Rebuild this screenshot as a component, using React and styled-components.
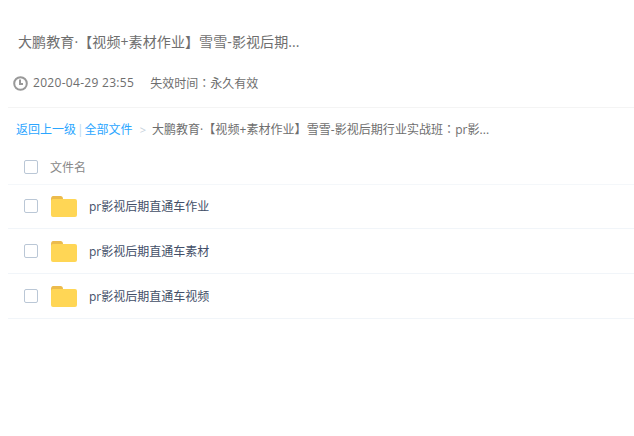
import React from "react";
import styled, { createGlobalStyle } from "styled-components";

const Global = createGlobalStyle`
  html, body { margin: 0; padding: 0; background: #fff; }
  body {
    font-family: "Open Sans", "Noto Sans CJK SC", sans-serif;
    text-spacing-trim: space-all;
  }
`;

const Page = styled.div`
  width: 634px;
  height: 436px;
  overflow: hidden;
  padding-left: 8px;
  box-sizing: border-box;
`;

const Title = styled.h1`
  margin: 0;
  padding: 33px 0 0 10px;
  height: 18px;
  font-size: 14px;
  line-height: 18px;
  font-weight: 400;
  letter-spacing: 0.1px;
  color: #6e6e6e;
  white-space: nowrap;
`;

const Meta = styled.div`
  display: flex;
  align-items: center;
  height: 18px;
  margin-top: 23px;
  padding-left: 5px;
  padding-bottom: 1px;
  font-size: 12px;
  line-height: 18px;
  color: #6e6e6e;
  white-space: nowrap;
`;

const ClockIcon = styled.svg`
  width: 15px;
  height: 15px;
  margin-right: 5px;
  flex: none;
`;

const DateText = styled.span`
  letter-spacing: 0.3px;
`;

const Expiry = styled.span`
  margin-left: 16px;
`;

const Colon = styled.span`
  font-family: "Noto Sans CJK TC", sans-serif;
`;

const Crumbs = styled.nav`
  display: flex;
  align-items: center;
  height: 42px;
  margin-top: 14px;
  border-top: 1px solid #f4f4f4;
  padding-left: 8px;
  font-size: 12px;
  color: #6e6e6e;
  white-space: nowrap;
`;

const CrumbLink = styled.a`
  color: #2ba6ff;
`;

const Bar = styled.span`
  color: #bcd9f0;
  margin: 0 1px;
`;

const Chevron = styled.span`
  color: #c5d0da;
  margin: 0 6px 0 7px;
  font-size: 11px;
`;

const CurrentPath = styled.span`
  letter-spacing: 0.05px;
`;

const HeaderRow = styled.div`
  display: flex;
  align-items: center;
  height: 34px;
  border-bottom: 1px solid #f4f7fa;
  font-size: 12px;
  color: #888;
`;

const List = styled.div`
  display: flex;
  flex-direction: column;
`;

const Row = styled.div`
  display: flex;
  align-items: center;
  height: 44px;
  border-bottom: 1px solid #f1f5f9;
  font-size: 12px;
  color: #424e67;

  &:first-child {
    height: 42px;
    padding-bottom: 1px;
  }
`;

const Check = styled.span`
  width: 12px;
  height: 12px;
  margin-left: 16px;
  border: 1px solid #bac7d6;
  border-radius: 2px;
  background: #fff;
  flex: none;
`;

const HeaderLabel = styled.span`
  margin-left: 12px;
`;

const FolderIcon = styled.svg`
  width: 26px;
  height: 21px;
  margin-left: 13px;
  flex: none;
`;

const FileName = styled.span`
  margin-left: 12px;
`;

const Folder = () => (
  <FolderIcon viewBox="0 0 26 21">
    <path d="M0 3C0 1 1 0 2 0h7.500c1.500 0 2.500 1 2.500 3v2H0z" fill="#ecbb4c" />
    <rect x="0" y="3" width="26" height="18" rx="2" fill="#ffd655" />
  </FolderIcon>
);

const files = ["pr影视后期直通车作业", "pr影视后期直通车素材", "pr影视后期直通车视频"];

export default function App() {
  return (
    <Page>
      <Global />
      <Title>大鹏教育·【视频+素材作业】雪雪-影视后期...</Title>
      <Meta>
        <ClockIcon viewBox="0 0 15 15" fill="none" stroke="#999" strokeWidth="2">
          <circle cx="7.500" cy="7.500" r="6.300" />
          <path d="M7 3.500v4.500h3" />
        </ClockIcon>
        <DateText>2020-04-29 23:55</DateText>
        <Expiry>
          失效时间<Colon>：</Colon>永久有效
        </Expiry>
      </Meta>
      <Crumbs>
        <CrumbLink>返回上一级</CrumbLink>
        <Bar>|</Bar>
        <CrumbLink>全部文件</CrumbLink>
        <Chevron>&gt;</Chevron>
        <CurrentPath>
          大鹏教育·【视频+素材作业】雪雪-影视后期行业实战班<Colon>：</Colon>pr影...
        </CurrentPath>
      </Crumbs>
      <HeaderRow>
        <Check />
        <HeaderLabel>文件名</HeaderLabel>
      </HeaderRow>
      <List>
        {files.map((f) => (
          <Row key={f}>
            <Check />
            <Folder />
            <FileName>{f}</FileName>
          </Row>
        ))}
      </List>
    </Page>
  );
}
